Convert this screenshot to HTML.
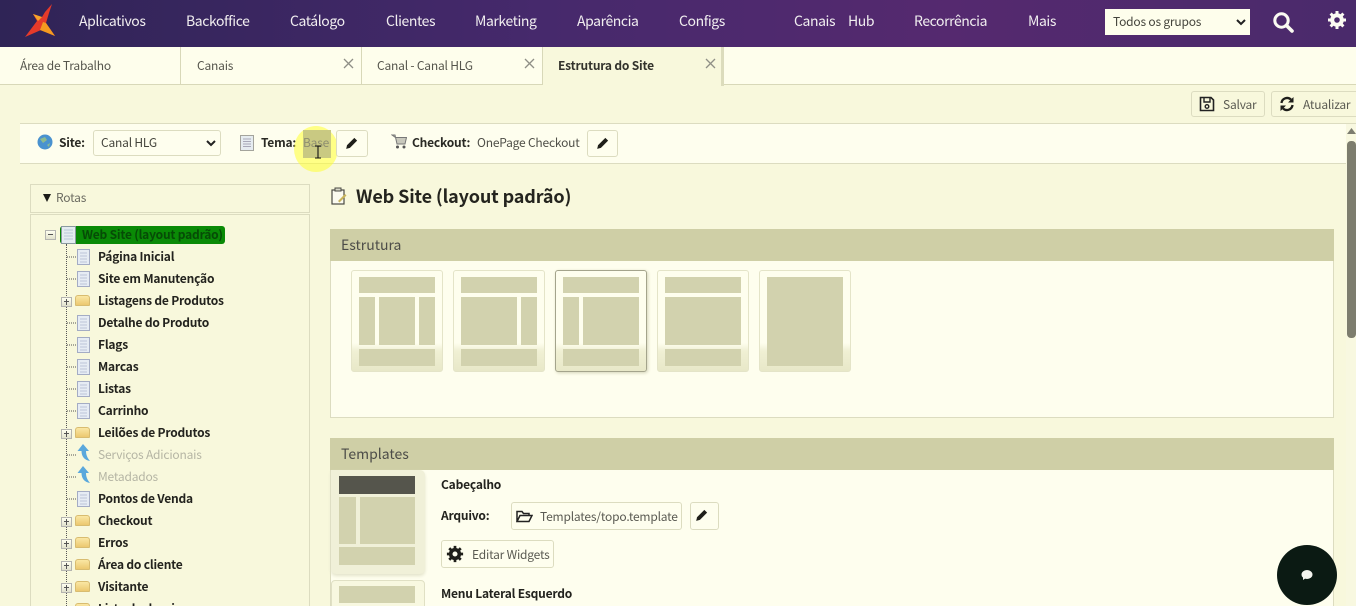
<!DOCTYPE html>
<html lang="pt"><head><meta charset="utf-8"><title>Estrutura do Site</title>
<style>
*{box-sizing:border-box}
html,body{margin:0;padding:0;width:1356px;height:606px;overflow:hidden}
body{position:relative;background:#f8f8dc;font-family:"Noto Sans CJK JP","Liberation Sans",sans-serif;font-size:12px;letter-spacing:-.2px;color:#44443c}
.a{position:absolute;white-space:nowrap}
#nav{left:0;top:0;width:1356px;height:47px;background:linear-gradient(90deg,#2f2456 0,#46296c 40%,#55296f 70%,#4a2a6b 100%)}
#nav .n{position:absolute;top:11px;font-size:14px;letter-spacing:-.42px;line-height:20px;color:#f1eef0}
.tab{position:absolute;top:47px;height:38px;line-height:37px;font-size:12px;color:#55554c;padding-left:16px;background:#fefeec;border-right:1px solid #d8d8b8;border-bottom:1px solid #d8d8b8}
.btn{position:absolute;background:transparent;border:1px solid #dcdcc0;border-radius:3px}
.t{position:absolute;left:98px;font-size:12px;font-weight:700;line-height:16px;color:#23231e}
.t.d{font-weight:400;color:#b5b5a4}
.p{position:absolute;left:61px;width:11px;height:10px;background:linear-gradient(#fffff0,#e0e0cc);border:1px solid #b4b4b0}
.p:before{content:"";position:absolute;left:2px;top:3px;width:5px;height:2px;border-top:1px solid #555}
.p.plus:after{content:"";position:absolute;left:4px;top:1px;height:6px;border-left:1px solid #555}
.f{position:absolute;left:75px;width:15px;height:11px;background:linear-gradient(#fae7a4,#ecc870);border:1px solid #d8bc70;border-radius:3px 3px 1px 1px}
.thumb{position:absolute;top:270px;width:92px;height:102px;background:linear-gradient(#fefeee 72%,#f0f0d4 80%,#e8e8c8 100%);border:1px solid #e4e4c8;border-radius:3px}
.thumb svg{position:absolute;left:-1px;top:-1px}
.g{fill:#d2d2ae}
.hd{left:330px;width:1004px;height:32px;background:#cfcfa6;padding-left:11px;font-size:14px;letter-spacing:0;line-height:33px;color:#4c4c48}
</style></head>
<body>
<div class="a" id="nav">
 <svg class="a" style="left:0;top:0" width="60" height="47" viewBox="0 0 60 47"><path d="M52 4 45 12 42 17 33 14 37 21 25 37 41 30 55 36 46 23 49 13Z" fill="#e63a2a"/><path d="M33 14 42 17 38 21Z" fill="#f6a52a"/><path d="M43 22 46 23 55 36 40 30Z" fill="#f59a20"/></svg>
 <span class="n" style="left:79px">Aplicativos</span>
 <span class="n" style="left:186px">Backoffice</span>
 <span class="n" style="left:290px">Catálogo</span>
 <span class="n" style="left:386px">Clientes</span>
 <span class="n" style="left:475px">Marketing</span>
 <span class="n" style="left:577px">Aparência</span>
 <span class="n" style="left:679px">Configs</span>
 <span class="n" style="left:794px">Canais</span>
 <span class="n" style="left:848px">Hub</span>
 <span class="n" style="left:914px">Recorrência</span>
 <span class="n" style="left:1028px">Mais</span>
 <div class="a" style="left:1105px;top:9px;width:145px;height:26px;background:#fefeec;color:#44443c;font-size:12px;line-height:26px;padding-left:8px">Todos os grupos
  <svg class="a" style="left:131px;top:10px" width="10" height="7" viewBox="0 0 10 7"><path d="M1 1 5 5 9 1" fill="none" stroke="#222" stroke-width="2"/></svg></div>
 <svg class="a" style="left:1272px;top:11px" width="22" height="22" viewBox="0 0 22 22"><circle cx="9.500" cy="9.500" r="6.700" fill="none" stroke="#fbfbf2" stroke-width="3"/><path d="M14.500 14.500 20 20" stroke="#fbfbf2" stroke-width="3.600" stroke-linecap="round"/></svg>
 <svg class="a" style="left:1327px;top:10px" width="20" height="20" viewBox="0 0 20 20"><path d="M10 3.200a6.800 6.800 0 1 0 0 13.600 6.800 6.800 0 1 0 0-13.600Zm0 4a2.800 2.800 0 1 1 0 5.600 2.800 2.800 0 1 1 0-5.600Z" fill="#fbfbf2" fill-rule="evenodd"/><path d="M10 1v3M10 16v3M1 10h3M16 10h3M3.600 3.600l2.200 2.200M14.200 14.200l2.200 2.200M3.600 16.400l2.200-2.200M14.200 5.800l2.200-2.200" stroke="#fbfbf2" stroke-width="3"/></svg>
</div>

<div class="a" style="left:0;top:47px;width:1356px;height:38px;background:#fefeec;border-bottom:1px solid #d8d8b8"></div>
<div class="tab" style="left:0;width:181px;padding-left:20px">Área de Trabalho</div>
<div class="tab" style="left:181px;width:181px">Canais</div>
<div class="tab" style="left:362px;width:181px;padding-left:15px">Canal - Canal HLG</div>
<div class="tab" style="left:543px;width:181px;padding-left:15px;background:#f8f8dc;font-weight:700;color:#33332c;border-bottom:0;border-right:3px solid #dcdcbc;height:39px">Estrutura do Site</div>
<svg class="a" style="left:343px;top:58px" width="11" height="11"><path d="M1 1 10 10M10 1 1 10" stroke="#8f8f86" stroke-width="1.300"/></svg>
<svg class="a" style="left:524px;top:58px" width="11" height="11"><path d="M1 1 10 10M10 1 1 10" stroke="#8f8f86" stroke-width="1.300"/></svg>
<svg class="a" style="left:705px;top:58px" width="11" height="11"><path d="M1 1 10 10M10 1 1 10" stroke="#8f8f86" stroke-width="1.300"/></svg>

<div class="btn" style="left:1191px;top:91px;width:74px;height:26px"></div>
<svg class="a" style="left:1199px;top:96px" width="16" height="16" viewBox="0 0 16 16"><path d="M1.500 1.500H12L14.500 4V14.500H1.500Z" fill="none" stroke="#222" stroke-width="1.600"/><path d="M5 2V6H11V2" fill="none" stroke="#222" stroke-width="1.400"/><circle cx="8" cy="10.500" r="1.800" fill="none" stroke="#222" stroke-width="1.400"/></svg>
<span class="a" style="left:1223px;top:96px;line-height:17px;color:#5a5a52">Salvar</span>
<div class="btn" style="left:1271px;top:91px;width:95px;height:26px"></div>
<svg class="a" style="left:1279px;top:96px" width="16" height="16" viewBox="0 0 16 16"><path d="M2.500 7A5.600 5.600 0 0 1 12 3.600M13.500 9A5.600 5.600 0 0 1 4 12.400" fill="none" stroke="#1d1d1a" stroke-width="2.300"/><path d="M14.500 1V6.500H9ZM1.500 15V9.500H7Z" fill="#1d1d1a"/></svg>
<span class="a" style="left:1303px;top:96px;line-height:17px;color:#5a5a52">Atualizar</span>

<div class="a" style="left:20px;top:123px;width:1336px;height:41px;background:#fefeee;border-top:1px solid #dcdcc0;border-bottom:1px solid #dcdcc0"></div>
<svg class="a" style="left:37px;top:134px" width="16" height="16"><circle cx="8" cy="8" r="7.500" fill="#4a92cf"/><path d="M3 5 8 3 10 6 6 9ZM10 11l3-2-1 4Z" fill="#8dbb90"/></svg>
<b class="a" style="left:59px;top:134px;line-height:17px;color:#2a2a24">Site:</b>
<div class="btn" style="left:93px;top:130px;width:128px;height:26px;line-height:24px;padding-left:7px;color:#44443c">Canal HLG<svg class="a" style="left:112px;top:9px" width="10" height="7" viewBox="0 0 10 7"><path d="M1 1 5 5 9 1" fill="none" stroke="#222" stroke-width="2"/></svg></div>
<svg class="a" style="left:240px;top:135px" width="14" height="16"><rect x=".5" y=".5" width="13" height="15" fill="#e6ecf0" stroke="#a4a49c"/><path d="M3 4h8M3 6.500h8M3 9h8M3 11.500h8" stroke="#a8a8b8"/></svg>
<b class="a" style="left:261px;top:134px;line-height:17px;color:#2a2a24">Tema:</b>

<div class="a" style="left:294px;top:126px;width:44px;height:46px;border-radius:50%;background:rgba(255,255,50,.55)"></div>
<div class="a" style="left:303px;top:130px;width:28px;height:28px;background:#c9c982"></div>
<span class="a" style="left:303px;top:134px;line-height:17px;color:#8f8f70">Base</span>
<svg class="a" style="left:313px;top:145px" width="10" height="14"><path d="M2 1H8M5 1V13M2 13H8" stroke="#111" fill="none" stroke-width="1.100"/></svg>

<div class="btn" style="left:336px;top:130px;width:32px;height:27px;background:#fefeee"></div>
<svg class="a" style="left:345px;top:136px" width="14" height="14" viewBox="0 0 12 12"><path d="M1 11 1.800 7.800 8 1.600 10.400 4 4.200 10.200Z" fill="#1f1f1a"/></svg>
<svg class="a" style="left:391px;top:134px" width="16" height="15"><path d="M1 1H4L6 10H14L15.500 3.500H4.500Z" fill="#c9c9bd" stroke="#777" stroke-width="1"/><circle cx="6.500" cy="13" r="1.500" fill="#555"/><circle cx="13" cy="13" r="1.500" fill="#555"/></svg>
<b class="a" style="left:412px;top:134px;line-height:17px;color:#2a2a24">Checkout:</b>
<span class="a" style="left:477px;top:134px;line-height:17px;color:#4f4f48">OnePage Checkout</span>
<div class="btn" style="left:587px;top:130px;width:31px;height:27px"></div>
<svg class="a" style="left:596px;top:136px" width="14" height="14" viewBox="0 0 12 12"><path d="M1 11 1.800 7.800 8 1.600 10.400 4 4.200 10.200Z" fill="#1f1f1a"/></svg>

<div class="a" style="left:30px;top:184px;width:280px;height:29px;border:1px solid #dcdcc0"></div>
<svg class="a" style="left:43px;top:194px" width="8" height="8"><path d="M0 0H8L4 8Z" fill="#1c1c18"/></svg>
<span class="a" style="left:56px;top:189px;line-height:17px;color:#6a6a60">Rotas</span>
<div class="a" style="left:30px;top:214px;width:280px;height:400px;border:1px solid #dcdcc0"></div>

<div class="a" style="left:66px;top:244px;height:362px;border-left:1px dotted #555"></div>
<div class="p" style="left:45px;top:230px"></div>
<div class="a" style="left:60px;top:226px;width:165px;height:18px;background:#0a8a06;border-radius:3px"></div>
<svg class="a" style="left:61px;top:226px" width="15" height="18"><rect x=".5" y=".5" width="14" height="17" fill="#e4ecf0" stroke="#8a9aa0"/><path d="M3 4h9M3 7h9M3 10h9M3 13h9" stroke="#b8c8d8"/></svg>
<span class="a" style="left:82px;top:226px;line-height:17px;font-weight:700;color:#064b06;font-size:12px">Web Site (layout padrão)</span>

<svg class="a" style="left:66px;top:249px" width="26" height="352" viewBox="0 0 26 352">
<defs><g id="pg"><rect x="11.500" y="0.500" width="12" height="15" fill="#e6ecf4" stroke="#a4acc4"/><path d="M14 4h7M14 7h7M14 10h7M14 13h7" stroke="#bcc4d8"/><path d="M1 8h9" stroke="#555" stroke-dasharray="1 1"/></g>
<g id="ar"><path d="M1 8h9" stroke="#555" stroke-dasharray="1 1"/><path d="M17 -3 23 4H20C20 8 21.500 11 24 14 18 13 15.500 9 15.500 4H11.500Z" fill="#5aa8dc"/></g></defs>
<use href="#pg" y="0"/><use href="#pg" y="22"/><use href="#pg" y="66"/><use href="#pg" y="88"/><use href="#pg" y="110"/><use href="#pg" y="132"/><use href="#pg" y="154"/>
<use href="#ar" y="198"/><use href="#ar" y="220"/><use href="#pg" y="242"/>
</svg>

<span class="t" style="top:249px">Página Inicial</span>
<span class="t" style="top:271px">Site em Manutenção</span>
<span class="t" style="top:293px">Listagens de Produtos</span>
<span class="t" style="top:315px">Detalhe do Produto</span>
<span class="t" style="top:337px">Flags</span>
<span class="t" style="top:359px">Marcas</span>
<span class="t" style="top:381px">Listas</span>
<span class="t" style="top:403px">Carrinho</span>
<span class="t" style="top:425px">Leilões de Produtos</span>
<span class="t d" style="top:447px">Serviços Adicionais</span>
<span class="t d" style="top:469px">Metadados</span>
<span class="t" style="top:491px">Pontos de Venda</span>
<span class="t" style="top:513px">Checkout</span>
<span class="t" style="top:535px">Erros</span>
<span class="t" style="top:557px">Área do cliente</span>
<span class="t" style="top:579px">Visitante</span>
<span class="t" style="top:601px">Lista de desejos</span>

<div class="p plus" style="top:297px"></div><div class="f" style="top:295px"></div>
<div class="p plus" style="top:429px"></div><div class="f" style="top:427px"></div>
<div class="p plus" style="top:517px"></div><div class="f" style="top:515px"></div>
<div class="p plus" style="top:539px"></div><div class="f" style="top:537px"></div>
<div class="p plus" style="top:561px"></div><div class="f" style="top:559px"></div>
<div class="p plus" style="top:583px"></div><div class="f" style="top:581px"></div>
<div class="f" style="top:603px"></div>

<svg class="a" style="left:331px;top:187px" width="16" height="18" viewBox="0 0 16 18"><rect x="1" y="3" width="12" height="14" fill="#fbfbf0" stroke="#4a4a44" stroke-width="1.200"/><rect x="4" y="1" width="6" height="3" fill="#d8d8c8" stroke="#4a4a44"/><path d="M7 14 14 7 15.500 8.500 8.500 15.500Z" fill="#c8b45a"/></svg>
<b class="a" style="left:356px;top:184px;font-size:18px;letter-spacing:-.13px;line-height:24px;color:#24241e">Web Site (layout padrão)</b>

<div class="a" style="left:330px;top:229px;width:1004px;height:189px;background:#fefeee;border:1px solid #dcdcc0"></div>
<div class="a hd" style="top:229px">Estrutura</div>

<div class="thumb" style="left:351px"><svg width="92" height="102"><rect class="g" x="8" y="7" width="76" height="16"/><rect class="g" x="8" y="27" width="16" height="48"/><rect class="g" x="28" y="27" width="36" height="48"/><rect class="g" x="68" y="27" width="16" height="48"/><rect class="g" x="8" y="79" width="76" height="17"/></svg></div>
<div class="thumb" style="left:453px"><svg width="92" height="102"><rect class="g" x="8" y="7" width="76" height="16"/><rect class="g" x="8" y="27" width="56" height="48"/><rect class="g" x="68" y="27" width="16" height="48"/><rect class="g" x="8" y="79" width="76" height="17"/></svg></div>
<div class="thumb" style="left:555px;border-color:#a4a48c;box-shadow:1px 1px 3px #d4d4b8"><svg width="92" height="102"><rect class="g" x="8" y="7" width="76" height="16"/><rect class="g" x="8" y="27" width="16" height="48"/><rect class="g" x="28" y="27" width="56" height="48"/><rect class="g" x="8" y="79" width="76" height="17"/></svg></div>
<div class="thumb" style="left:657px"><svg width="92" height="102"><rect class="g" x="8" y="7" width="76" height="16"/><rect class="g" x="8" y="27" width="76" height="48"/><rect class="g" x="8" y="79" width="76" height="17"/></svg></div>
<div class="thumb" style="left:759px"><svg width="92" height="102"><rect class="g" x="8" y="7" width="76" height="89"/></svg></div>

<div class="a" style="left:330px;top:438px;width:1004px;height:180px;background:#fefeee;border:1px solid #dcdcc0"></div>
<div class="a hd" style="top:438px">Templates</div>

<div class="a" style="left:331px;top:470px;width:94px;height:104px;background:#f0f0d8;border-radius:0 5px 5px 5px;box-shadow:0 2px 3px #e4e4cc"></div>
<svg class="a" style="left:331px;top:470px" width="94" height="136"><rect x="8" y="6" width="76" height="18" fill="#55554c"/><rect x="8" y="27" width="17" height="47" fill="#d2d2ae"/><rect x="29" y="27" width="55" height="47" fill="#d2d2ae"/><rect x="8" y="77" width="76" height="18" fill="#d2d2ae"/></svg>
<div class="a" style="left:331px;top:580px;width:94px;height:30px;background:#f8f8e0;border:1px solid #e0e0c4;border-radius:4px"></div>
<div class="a" style="left:339px;top:586px;width:76px;height:17px;background:#d2d2ae"></div>

<b class="a" style="left:441px;top:476px;line-height:17px;color:#23231e">Cabeçalho</b>
<b class="a" style="left:441px;top:507px;line-height:17px;color:#23231e">Arquivo:</b>
<div class="btn" style="left:511px;top:502px;width:171px;height:28px"></div>
<svg class="a" style="left:516px;top:510px" width="17" height="13" viewBox="0 0 17 13"><path d="M1 11.500V1.500H6L7.500 3.500H13V5.500M1 11.500 4 5.500H16L13 11.500Z" fill="none" stroke="#222" stroke-width="1.500"/></svg>
<span class="a" style="left:540px;top:508px;line-height:17px;color:#5a5a52">Templates/topo.template</span>
<div class="btn" style="left:690px;top:502px;width:29px;height:28px"></div>
<svg class="a" style="left:695px;top:508px" width="14" height="14" viewBox="0 0 12 12"><path d="M1 11 1.800 7.800 8 1.600 10.400 4 4.200 10.200Z" fill="#1f1f1a"/></svg>
<div class="btn" style="left:441px;top:540px;width:113px;height:28px"></div>
<svg class="a" style="left:446px;top:545px" width="18" height="18" viewBox="0 0 20 20"><path d="M10 3.200a6.800 6.800 0 1 0 0 13.600 6.800 6.800 0 1 0 0-13.600Zm0 4a2.800 2.800 0 1 1 0 5.600 2.800 2.800 0 1 1 0-5.600Z" fill="#1f1f1a" fill-rule="evenodd"/><path d="M10 1v3M10 16v3M1 10h3M16 10h3M3.600 3.600l2.200 2.200M14.200 14.200l2.200 2.200M3.600 16.400l2.200-2.200M14.200 5.800l2.200-2.200" stroke="#1f1f1a" stroke-width="3"/></svg>
<span class="a" style="left:472px;top:546px;line-height:17px;color:#5a5a52">Editar Widgets</span>
<b class="a" style="left:441px;top:585px;line-height:17px;color:#23231e">Menu Lateral Esquerdo</b>

<div class="a" style="left:1346px;top:124px;width:10px;height:482px;background:#f8f8e0"></div>
<svg class="a" style="left:1347px;top:127px" width="9" height="8"><path d="M4.500 1 9 7H0Z" fill="#7c7c70"/></svg>
<div class="a" style="left:1347px;top:141px;width:9px;height:197px;background:#7d7d6e;border-radius:4px"></div>

<div class="a" style="left:1277px;top:545px;width:60px;height:60px;border-radius:50%;background:#0b1a13"></div>
<svg class="a" style="left:1300px;top:569px" width="14" height="12"><ellipse cx="7" cy="5.500" rx="5.500" ry="4.500" fill="#f4f4ee"/><path d="M3 8 3 11 6 9Z" fill="#f4f4ee"/></svg>
</body></html>
